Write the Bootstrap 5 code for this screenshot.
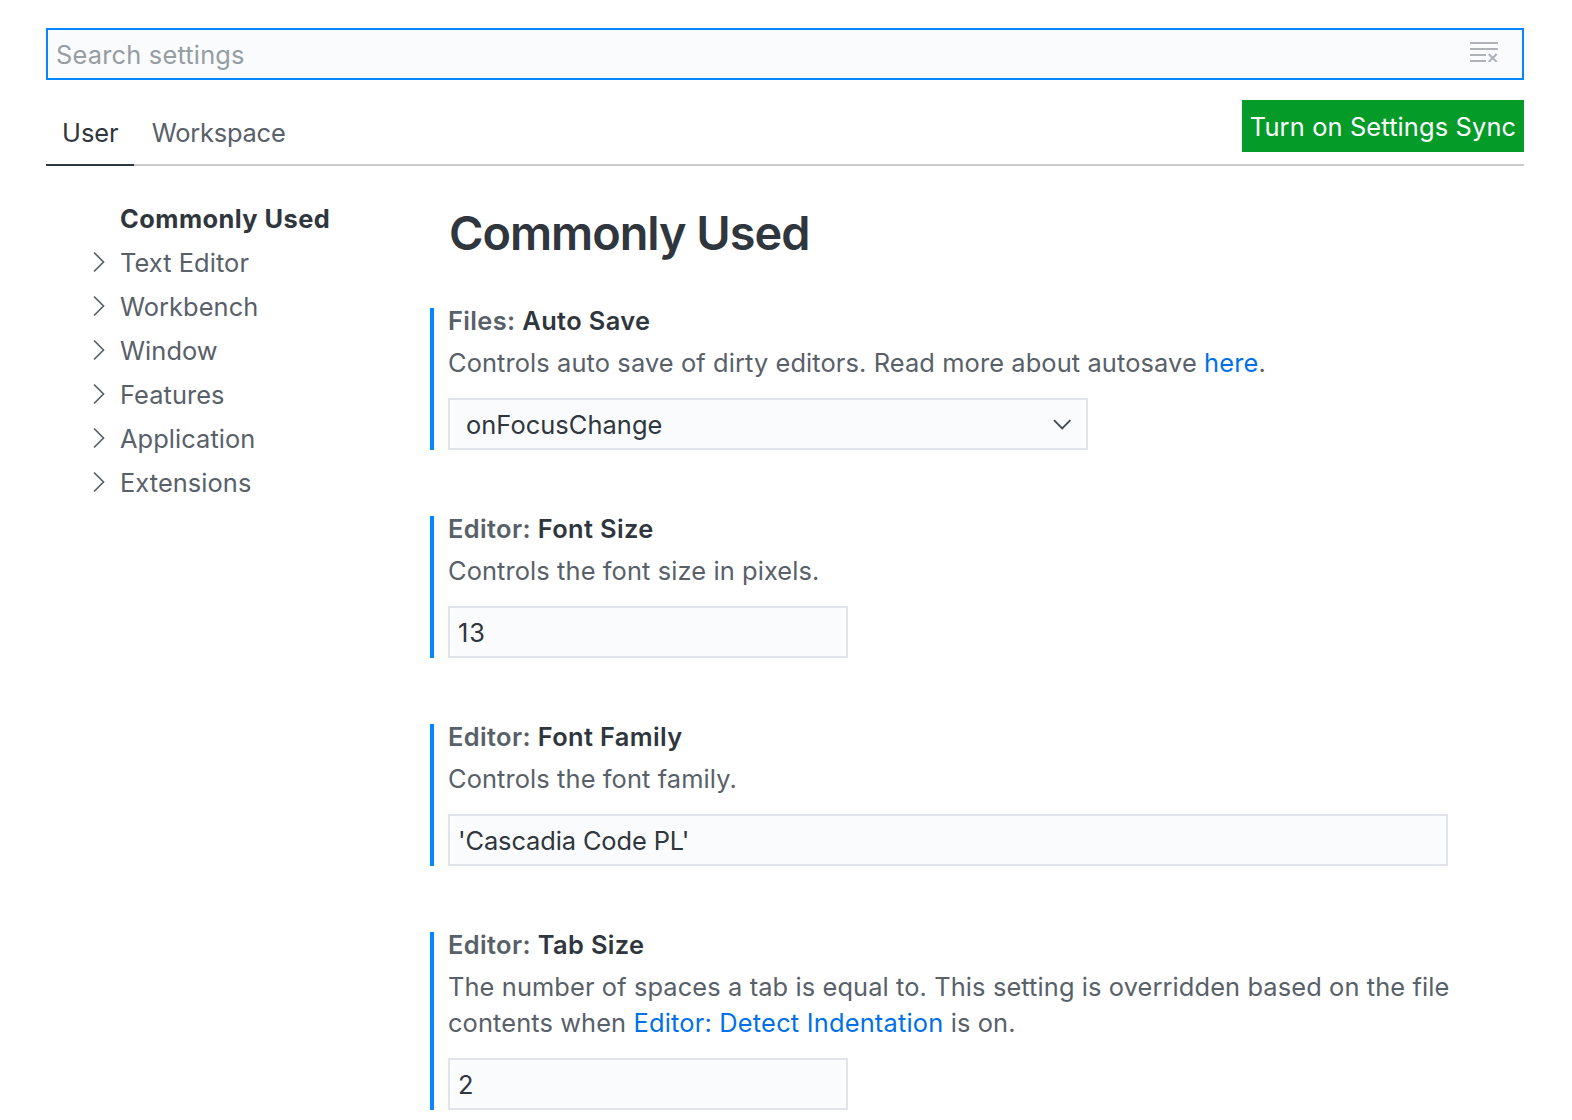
<!DOCTYPE html>
<html lang="en">
<head>
<meta charset="utf-8">
<meta name="viewport" content="width=device-width, initial-scale=1">
<title>Settings</title>
<link href="https://cdn.jsdelivr.net/npm/bootstrap@5.3.0/dist/css/bootstrap.min.css" rel="stylesheet">
<style>
  body { font-family: Inter, "Liberation Sans", sans-serif; font-size: 25.4px; line-height: 36px; color: #586069; background: #fff; height: 1120px; overflow: hidden; }
  .settings-page { padding: 28px 48px 0 46px; }
  .search-box { height: 52px; border: 2px solid #0588ff; background: #fafbfc; padding: 0 24px 4px 8px; }
  .search-box input { color: #2f363d; letter-spacing: .2px; padding: 6px 0 0; outline: 0; }
  .search-box input::placeholder { color: #959da5; opacity: 1; }
  .tab-bar { height: 86px; border-bottom: 2px solid #ccc; padding-top: 20px; }
  .tab-bar .nav-link { color: #586069; padding: 15px 17px 0 18px; height: 66px; line-height: 36px; letter-spacing: -.2px; border-bottom: 2px solid transparent; }
  .tab-bar .nav-link.active { color: #2f363d; border-bottom-color: #2f363d; padding-left: 16px; padding-right: 15px; letter-spacing: 0; }
  .sync-btn { background: #059b28; color: #fff; font-size: inherit; height: 52px; width: 282px; padding: 1px 0 0; letter-spacing: .14px; line-height: 36px; border: 0; }
  .sync-btn:hover { background: #048a23; color: #fff; }
  .toc { width: 384px; padding: 31px 0 0 42px; }
  .toc a { height: 44px; color: #586069; gap: 12px; letter-spacing: .07px; }
  .toc a.active { color: #2f363d; letter-spacing: .45px; }
  .toc svg { position: relative; top: -1px; }
  .settings-title { font-size: 46.8px; line-height: 60px; color: #2f363d; margin: 37px 0 45px 19px; letter-spacing: -1px; }
  .setting { border-left: 4px solid #0588ff; padding-left: 14px; margin-bottom: 66px; width: 1024px; }
  .setting h2 { font-size: inherit; line-height: 36px; margin: -5px 0 6px; letter-spacing: .38px; }
  .setting h2 span { color: #2f363d; }
  .setting p { margin: 0 0 17px; white-space: nowrap; letter-spacing: .11px; }
  .setting p a { color: #0070e8; letter-spacing: .2px; }
  .field { height: 52px; border: 2px solid #e1e4e8; border-radius: 0; background: #fafbfc; color: #2f363d; padding: 0 8px; font-size: inherit; line-height: 36px; }
  .field-narrow { width: 400px; letter-spacing: 1px; }
  .field-medium { width: 640px; padding: 1px 14px 0 16px; letter-spacing: .07px; }
  .field-medium svg { position: relative; top: -1px; }
  .field-wide { width: 1000px; letter-spacing: -.1px; }
</style>
</head>
<body>
<main class="settings-page">
  <div class="search-box d-flex align-items-center">
    <input class="border-0 bg-transparent flex-grow-1" type="text" placeholder="Search settings">
    <svg width="28" height="20" viewBox="0 0 28 20" fill="none" stroke="#adb3b9" stroke-width="2"><path d="M0 1h28M0 7h28M0 13h16M0 19h16M18.7 12l8 8M26.7 12l-8 8"/></svg>
  </div>
  <div class="tab-bar d-flex justify-content-between align-items-start">
    <nav class="nav flex-nowrap">
      <a class="nav-link active" href="#">User</a>
      <a class="nav-link" href="#">Workspace</a>
    </nav>
    <button class="btn sync-btn rounded-0" type="button">Turn on Settings Sync</button>
  </div>
  <div class="d-flex">
    <nav class="toc flex-shrink-0">
      <a href="#" class="active fw-bold d-flex align-items-center text-decoration-none"><svg width="20" height="24"></svg><span>Commonly Used</span></a>
      <a href="#" class="d-flex align-items-center text-decoration-none"><svg width="20" height="24" viewBox="0 0 20 24" fill="none" stroke="#586069" stroke-width="1.7"><path d="M6 2.5l9.5 9.5L6 21.5"/></svg><span>Text Editor</span></a>
      <a href="#" class="d-flex align-items-center text-decoration-none"><svg width="20" height="24" viewBox="0 0 20 24" fill="none" stroke="#586069" stroke-width="1.7"><path d="M6 2.5l9.5 9.5L6 21.5"/></svg><span>Workbench</span></a>
      <a href="#" class="d-flex align-items-center text-decoration-none"><svg width="20" height="24" viewBox="0 0 20 24" fill="none" stroke="#586069" stroke-width="1.7"><path d="M6 2.5l9.5 9.5L6 21.5"/></svg><span>Window</span></a>
      <a href="#" class="d-flex align-items-center text-decoration-none"><svg width="20" height="24" viewBox="0 0 20 24" fill="none" stroke="#586069" stroke-width="1.7"><path d="M6 2.5l9.5 9.5L6 21.5"/></svg><span>Features</span></a>
      <a href="#" class="d-flex align-items-center text-decoration-none"><svg width="20" height="24" viewBox="0 0 20 24" fill="none" stroke="#586069" stroke-width="1.7"><path d="M6 2.5l9.5 9.5L6 21.5"/></svg><span>Application</span></a>
      <a href="#" class="d-flex align-items-center text-decoration-none"><svg width="20" height="24" viewBox="0 0 20 24" fill="none" stroke="#586069" stroke-width="1.7"><path d="M6 2.5l9.5 9.5L6 21.5"/></svg><span>Extensions</span></a>
    </nav>
    <div class="flex-grow-1">
      <h1 class="settings-title fw-semibold">Commonly Used</h1>
      <section class="setting d-flex flex-column">
        <h2 class="fw-semibold">Files: <span>Auto Save</span></h2>
        <p>Controls auto save of dirty editors. Read more about autosave <a class="text-decoration-none" href="#">here</a>.</p>
        <div class="field field-medium d-flex justify-content-between align-items-center"><span>onFocusChange</span>
          <svg width="20" height="12" viewBox="0 0 20 12" fill="none" stroke="#424a52" stroke-width="1.9"><path d="M2 2.2l8.2 8.2 8.2-8.2"/></svg></div>
      </section>
      <section class="setting d-flex flex-column">
        <h2 class="fw-semibold">Editor: <span>Font Size</span></h2>
        <p>Controls the font size in pixels.</p>
        <input class="field field-narrow" type="text" value="13">
      </section>
      <section class="setting d-flex flex-column">
        <h2 class="fw-semibold">Editor: <span>Font Family</span></h2>
        <p>Controls the font family.</p>
        <input class="field field-wide" type="text" value="'Cascadia Code PL'">
      </section>
      <section class="setting d-flex flex-column">
        <h2 class="fw-semibold">Editor: <span>Tab Size</span></h2>
        <p>The number of spaces a tab is equal to. This setting is overridden based on the file<br>contents when <a class="text-decoration-none" href="#">Editor: Detect Indentation</a> is on.</p>
        <input class="field field-narrow" type="text" value="2">
      </section>
    </div>
  </div>
</main>
<script src="https://cdn.jsdelivr.net/npm/bootstrap@5.3.0/dist/js/bootstrap.bundle.min.js"></script>
</body>
</html>
